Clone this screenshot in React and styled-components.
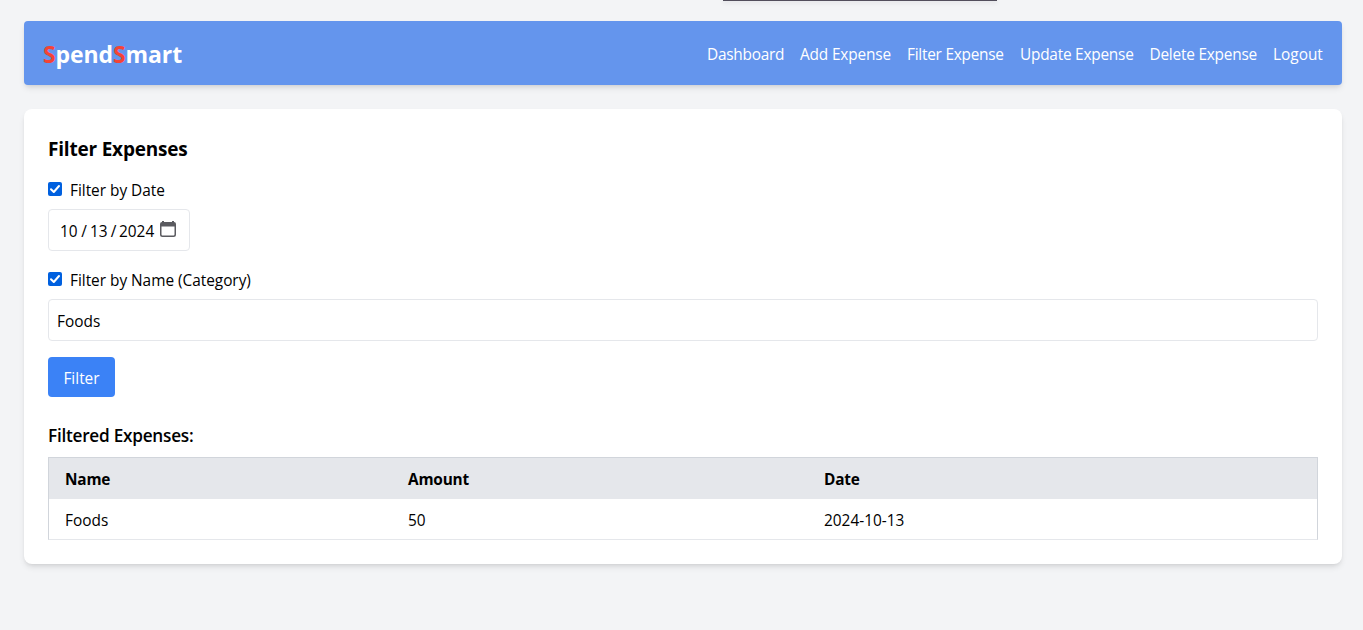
import React, { useState } from "react";
import styled, { createGlobalStyle } from "styled-components";

const GlobalStyle = createGlobalStyle`
  *, *::before, *::after { box-sizing: border-box; }
  body {
    margin: 0;
    background: #f3f4f6;
    color: #000;
    font-family: "Open Sans", "Noto Sans", sans-serif;
    font-size: 15.4px;
    line-height: 24px;
  }
  h1, h2, h3 { margin: 0; }
  button, input { font: inherit; color: inherit; letter-spacing: inherit; }
`;

const Page = styled.div`
  min-height: 630px;
  padding: 21px 21px 24px 24px;
`;

const TopTab = styled.div`
  position: absolute;
  top: 0;
  left: 723px;
  width: 274px;
  height: 1px;
  background: #524e5c;
  box-shadow: 0 1px 4px rgba(82, 78, 92, 0.3);
`;

const Navbar = styled.nav`
  display: flex;
  align-items: center;
  justify-content: space-between;
  height: 64px;
  margin-bottom: 24px;
  padding: 2px 19px 0;
  border-radius: 4px;
  background: #6495ed;
  color: #fff;
  box-shadow: 0 4px 6px -1px rgba(0, 0, 0, 0.1), 0 2px 4px -2px rgba(0, 0, 0, 0.1);
`;

const Brand = styled.h1`
  font-size: 23px;
  line-height: 32px;
  font-weight: 700;
  letter-spacing: -0.1px;
`;

const Accent = styled.span`
  color: #f44336;
`;

const NavLinks = styled.div`
  display: flex;
  gap: 16px;
  padding-top: 2px;
`;

const NavLink = styled.a`
  width: ${(p) => p.$width}px;
  white-space: nowrap;
  letter-spacing: ${(p) => p.$track || 0}px;
`;

const Card = styled.main`
  padding: 24px;
  border-radius: 8px;
  background: #fff;
  box-shadow: 0 4px 6px -1px rgba(0, 0, 0, 0.1), 0 2px 4px -2px rgba(0, 0, 0, 0.1);
`;

const Title = styled.h2`
  margin-bottom: 16px;
  padding-top: 2px;
  height: 28px;
  font-size: 19px;
  line-height: 28px;
  font-weight: 700;
  letter-spacing: -0.2px;
`;

const Field = styled.div`
  margin-bottom: 16px;
`;

const CheckLabel = styled.label`
  display: flex;
  gap: 8px;
  height: 24px;
  margin-bottom: 8px;
  letter-spacing: -0.02px;
`;

const CheckBox = styled.span`
  display: block;
  flex: none;
  width: 14px;
  height: 14px;
  margin-top: 5px;
  border-radius: 2px;
  background: #0060df;

  svg { display: block; }
`;

const LabelText = styled.span`
  padding-top: 2px;
`;

const DateBox = styled.div`
  display: flex;
  align-items: flex-start;
  width: 142px;
  height: 42px;
  padding: 9px 12px 0 11px;
  border: 1px solid #e5e7eb;
  border-radius: 4px;
`;

const DatePart = styled.span`
  width: ${(p) => p.$width}px;
  padding-top: 1px;
  text-align: ${(p) => p.$align || "left"};
`;

const CalendarIcon = styled.svg`
  display: block;
  margin: 2px 0 0 5px;
`;

const TextInput = styled.input`
  display: block;
  width: 100%;
  height: 42px;
  padding: 9px 8px 7px;
  border: 1px solid #e5e7eb;
  border-radius: 4px;
  background: #fff;
  outline: none;
`;

const FilterButton = styled.button`
  display: block;
  width: 67px;
  height: 40px;
  margin-bottom: 24px;
  padding: 10px 0 6px;
  border: 0;
  border-radius: 4px;
  background: #3b82f6;
  color: #fff;
`;

const Subtitle = styled.h3`
  height: 28px;
  margin-bottom: 8px;
  padding-top: 1px;
  font-size: 17.2px;
  line-height: 28px;
  font-weight: 600;
  letter-spacing: -0.25px;
`;

const Table = styled.table`
  width: 100%;
  height: 83px;
  border: 1px solid #d1d5db;
  border-bottom-color: #e5e7eb;
  border-spacing: 0;
  table-layout: fixed;
`;

const HeadCell = styled.th`
  width: ${(p) => p.$width || "auto"};
  height: 41px;
  padding: 3px 16px 0;
  background: #e5e7eb;
  text-align: left;
  font-weight: 700;
  letter-spacing: -0.2px;
`;

const Cell = styled.td`
  height: 40px;
  padding: 4px 16px 0;
`;

const links = [
  ["Dashboard", 77, -0.25],
  ["Add Expense", 91, -0.15],
  ["Filter Expense", 97, -0.25],
  ["Update Expense", 113.5, -0.23],
  ["Delete Expense", 107.5, -0.22],
  ["Logout", 50, 0],
];

const expenses = [{ name: "Foods", amount: 50, date: "2024-10-13" }];

function Checked() {
  return (
    <CheckBox>
      <svg width="14" height="14" viewBox="0 0 14 14" fill="none">
        <path d="M3 7.2 5.8 10 11 4" stroke="#fff" strokeWidth="2" strokeLinecap="round" strokeLinejoin="round" />
      </svg>
    </CheckBox>
  );
}

export default function App() {
  const [category, setCategory] = useState("Foods");
  return (
    <>
      <GlobalStyle />
      <TopTab />
      <Page>
        <Navbar>
          <Brand>
            <Accent>S</Accent>pend<Accent>S</Accent>mart
          </Brand>
          <NavLinks>
            {links.map(([label, width, track]) => (
              <NavLink key={label} $width={width} $track={track}>{label}</NavLink>
            ))}
          </NavLinks>
        </Navbar>
        <Card>
          <Title>Filter Expenses</Title>
          <Field>
            <CheckLabel>
              <Checked />
              <LabelText>Filter by Date</LabelText>
            </CheckLabel>
            <DateBox>
              <DatePart $width={18}>10</DatePart>
              <DatePart $width={12} $align="center">/</DatePart>
              <DatePart $width={18}>13</DatePart>
              <DatePart $width={11} $align="center">/</DatePart>
              <DatePart $width={36}>2024</DatePart>
              <CalendarIcon width="16" height="17" viewBox="0 0 16 17">
                <path
                  fill="#5b5b60"
                  fillRule="evenodd"
                  d="M2 0h2v1h8V0h2v1a2 2 0 0 1 2 2v10.500a2.500 2.500 0 0 1-2.500 2.500h-11A2.500 2.500 0 0 1 0 13.500V3a2 2 0 0 1 2-2zM1.500 5.500v7.700c0 .8.500 1.300 1.300 1.300h10.400c.8 0 1.300-.5 1.300-1.300V5.500z"
                />
              </CalendarIcon>
            </DateBox>
          </Field>
          <Field>
            <CheckLabel>
              <Checked />
              <LabelText>Filter by Name (Category)</LabelText>
            </CheckLabel>
            <TextInput value={category} onChange={(e) => setCategory(e.target.value)} />
          </Field>
          <FilterButton>Filter</FilterButton>
          <Subtitle>Filtered Expenses:</Subtitle>
          <Table>
            <thead>
              <tr>
                <HeadCell $width="343px">Name</HeadCell>
                <HeadCell $width="416px">Amount</HeadCell>
                <HeadCell>Date</HeadCell>
              </tr>
            </thead>
            <tbody>
              {expenses.map((e) => (
                <tr key={e.date}>
                  <Cell>{e.name}</Cell>
                  <Cell>{e.amount}</Cell>
                  <Cell>{e.date}</Cell>
                </tr>
              ))}
            </tbody>
          </Table>
        </Card>
      </Page>
    </>
  );
}
